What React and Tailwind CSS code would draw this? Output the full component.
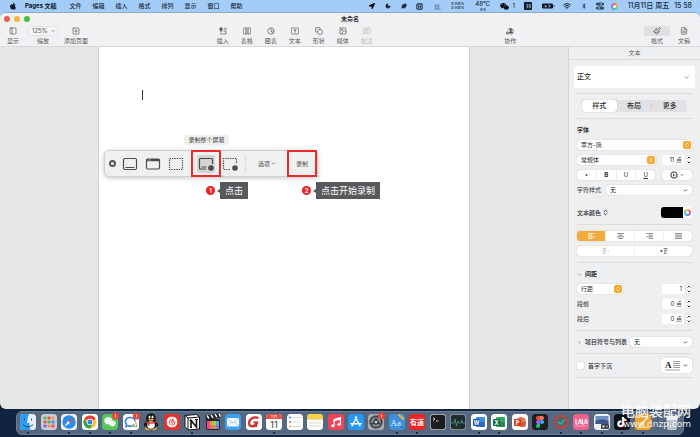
import React from "react";
import {
  ChevronDown,
  ChevronRight,
  ChevronsUpDown,
  FileText,
  Image,
  Leaf,
  MessageSquareText,
  Moon,
  Paintbrush,
  PanelLeft,
  SquarePlus,
  ToggleLeft,
  Wifi,
} from "lucide-react";
import { FaApple, FaBluetoothB, FaLocationArrow, FaMusic, FaTiktok, FaWeixin } from "react-icons/fa";
import { SiNeteasecloudmusic } from "react-icons/si";

const menus = ["文件", "编辑", "插入", "格式", "排列", "显示", "窗口", "帮助"];

function MenuBar() {
  return (
    <header className="flex h-3 shrink-0 items-center justify-between pr-2 pl-[9px] text-[6px] leading-[12px] font-medium text-[#1b2a3c]">
      <nav className="flex items-center gap-[11px] whitespace-nowrap">
        <FaApple className="mr-[-3px] h-2 w-2 text-[#101820]" />
        <a href="#pages" className="pr-[2px] font-bold text-[#0c141e]">
          Pages 文稿
        </a>
        {menus.map((name) => (
          <a href="#menu" key={name}>
            {name}
          </a>
        ))}
      </nav>
      <div className="flex items-center whitespace-nowrap">
        <span className="flex w-4 justify-center">
          <FaLocationArrow className="h-[6px] w-[6px] text-black" />
        </span>
        <span className="flex w-4 justify-center">
          <Moon className="h-[6px] w-[6px]" fill="currentColor" />
        </span>
        <span className="flex w-4 justify-center">
          <Leaf className="h-[6px] w-[6px]" fill="currentColor" />
        </span>
        <span className="flex w-4 justify-center">
          <svg viewBox="0 0 8 8" className="h-[7px] w-[7px]" fill="none" stroke="currentColor">
            <rect x="1" y="1" width="6" height="6" rx="1" strokeWidth="1.2" />
            <path d="M2.8 5.8V2.5l2.4 3V2.3" strokeWidth=".9" />
          </svg>
        </span>
        <span className="flex w-5 justify-center">
          <svg viewBox="0 0 8 8" className="h-[7px] w-[7px]" fill="none" stroke="#56718f">
            <path d="M1.5 1v6M3.5 3.5V7M5.5 1v6M.5 7h7M1.5 3h4" strokeWidth=".8" />
          </svg>
        </span>
        <span className="w-5 text-center text-[4px] leading-[4px]">
          0 KB/s
          <br />0 KB/s
        </span>
        <span className="flex w-[30px] flex-col items-center">
          <span className="leading-[8px]">48°C</span>
          <span className="text-[3px] leading-[4px]">SEN</span>
        </span>
        <span className="flex w-5 items-center justify-center gap-[3px]">
          <FaWeixin className="h-[9px] w-[9px] text-black" />1
        </span>
        <span className="flex w-[21px] justify-center">
          <svg viewBox="0 0 8 8" className="h-2 w-2">
            <rect width="8" height="8" rx="1" fill="#0d1722" />
            <path d="M2 2h1.5v4H2M2 4h1.5M5 2h1.5v4H5zM5 4h1.5" fill="none" stroke="#9fc4ea" strokeWidth=".6" />
          </svg>
        </span>
        <span className="flex w-5 justify-center">
          <svg viewBox="0 0 13 6" className="h-[6px] w-[13px]">
            <rect x="0" y=".5" width="11" height="5" rx="1.2" fill="#0d1722" />
            <rect x="11.5" y="2" width="1" height="2" fill="#34495f" />
            <path d="M3 2v2h1.5V3H3M6 2h1.5v2H6M8 3h1" stroke="#a8ccef" strokeWidth=".6" fill="none" />
          </svg>
        </span>
        <span className="flex w-[17px] justify-center">
          <Wifi className="h-2 w-2" strokeWidth={3} />
        </span>
        <span className="flex w-4 justify-center">
          <FaBluetoothB className="h-[6px] w-[6px]" />
        </span>
        <span className="flex w-4 flex-col items-center">
          <ToggleLeft className="h-1 w-2" strokeWidth={4} preserveAspectRatio="none" />
          <ToggleLeft className="h-1 w-2 rotate-180" strokeWidth={4} preserveAspectRatio="none" />
        </span>
        <span className="flex w-[14px] justify-center">
          <span className="h-[7px] w-[7px] rounded-full bg-[conic-gradient(#f06a5a,#f4b25c,#5fc97d,#4aa8ee,#a26be8,#f06a5a)] p-[2px]">
            <span className="block h-full rounded-full bg-white" />
          </span>
        </span>
        <time className="ml-[6px] text-[7px]">11月11日 周五</time>
        <time className="ml-[5px] text-[7px]">15 58</time>
      </div>
    </header>
  );
}

function Tool({ icon: Icon, label, disabled, active, wide }) {
  return (
    <button
      disabled={disabled}
      className={`flex flex-col items-center ${wide ? "w-[30px]" : "w-6"} ${
        disabled ? "text-[#bcbcbf]" : "text-[#58585c]"
      }`}
    >
      <span
        className={`flex h-[10px] items-center justify-center rounded-[2px] ${
          active ? "w-[26px] bg-[#e0e0e2]" : "w-5"
        }`}
      >
        <Icon className="h-2 w-2" strokeWidth={2} />
      </span>
      <span className="text-[6px] leading-[10px] whitespace-nowrap">{label}</span>
    </button>
  );
}

function InsertIcon({ className }) {
  return (
    <svg viewBox="0 0 24 24" className={className} fill="none" stroke="currentColor" strokeWidth="2">
      <path d="M3 3h6v9H3zM6 3v14M14 4h4M14 9h4M14 14h4M21 2v19H3" />
      <path d="M3 3h6v5H3z" fill="currentColor" />
    </svg>
  );
}

function TableIcon({ className }) {
  return (
    <svg viewBox="0 0 24 24" className={className} fill="none" stroke="currentColor" strokeWidth="2">
      <rect x="1" y="3" width="22" height="18" rx="2" />
      <path d="M8.500 3v18M15.500 3v18M8.500 9h7M8.500 15h7" />
    </svg>
  );
}

function ChartIcon({ className }) {
  return (
    <svg viewBox="0 0 24 24" className={className} fill="none" stroke="currentColor" strokeWidth="2">
      <circle cx="12" cy="12" r="9.500" />
      <path d="M12 3v9h9" />
      <path d="M12 12l6 7" />
    </svg>
  );
}

function TextBoxIcon({ className }) {
  return (
    <svg viewBox="0 0 24 24" className={className} fill="none" stroke="currentColor" strokeWidth="2">
      <rect x="1" y="3" width="22" height="18" rx="2" />
      <path d="M8 9h8M12 9v8" strokeWidth="2.5" />
    </svg>
  );
}

function ShapeIcon({ className }) {
  return (
    <svg viewBox="0 0 24 24" className={className} fill="none" stroke="currentColor" strokeWidth="2">
      <path d="M8 15H3a1 1 0 0 1-1-1V3a1 1 0 0 1 1-1h11a1 1 0 0 1 1 1v4" />
      <circle cx="15" cy="15" r="7.5" fill="#f1f1f3" />
    </svg>
  );
}

function CollabIcon({ className }) {
  return (
    <svg viewBox="0 0 24 24" className={className} fill="none" stroke="currentColor" strokeWidth="2">
      <path d="M5 9a9 9 0 1 1 8 13" />
      <circle cx="14" cy="9" r="3" fill="currentColor" />
      <path d="M9 18c1-6 10-6 11 0z" fill="currentColor" />
      <circle cx="5" cy="18" r="4" fill="#f1f1f3" />
      <path d="M5 16v4M3 18h4" />
    </svg>
  );
}

function Toolbar() {
  return (
    <div className="shrink-0 bg-[#f1f1f3]">
      <div className="grid h-3 grid-cols-[1fr_auto_1fr] items-center px-1">
        <div className="flex gap-1">
          <button aria-label="关闭" className="h-[6px] w-[6px] rounded-full bg-[#ec5f57]" />
          <button aria-label="最小化" className="h-[6px] w-[6px] rounded-full bg-[#f3b73b]" />
          <button aria-label="缩放窗口" className="h-[6px] w-[6px] rounded-full bg-[#43bf45]" />
        </div>
        <h1 className="text-[6px] leading-[12px] font-bold text-[#303033]">未命名</h1>
      </div>
      <div className="flex h-[21px] items-start justify-between pt-px pr-1 pl-px">
        <div className="flex w-[90px]">
          <Tool icon={PanelLeft} label="显示" />
          <div className="flex w-[36px] flex-col items-center text-[#58585c]">
            <div className="relative">
              <select
                id="zoom"
                className="block h-[10px] w-[30px] appearance-none rounded-[3px] border border-[#e4e4e6] bg-[#f5f5f7] pl-[3px] text-[6px] leading-[8px]"
              >
                <option>125%</option>
              </select>
              <ChevronDown className="pointer-events-none absolute top-[3px] right-[3px] h-1 w-1" strokeWidth={4} />
            </div>
            <label htmlFor="zoom" className="text-[6px] leading-[10px]">
              缩放
            </label>
          </div>
          <Tool icon={SquarePlus} label="添加页面" wide />
        </div>
        <div className="flex">
          <Tool icon={InsertIcon} label="插入" />
          <Tool icon={TableIcon} label="表格" />
          <Tool icon={ChartIcon} label="图表" />
          <Tool icon={TextBoxIcon} label="文本" />
          <Tool icon={ShapeIcon} label="形状" />
          <Tool icon={Image} label="媒体" />
          <Tool icon={MessageSquareText} label="批注" disabled />
        </div>
        <Tool icon={CollabIcon} label="协作" />
        <div className="flex">
          <Tool icon={Paintbrush} label="格式" active wide />
          <Tool icon={FileText} label="文稿" />
        </div>
      </div>
    </div>
  );
}

function CaptureButton({ label, active, children }) {
  return (
    <button
      aria-label={label}
      className={`flex h-[18px] w-[18px] items-center justify-center rounded-[3px] ${active ? "bg-[#d4d4d4]" : ""}`}
    >
      <svg viewBox="0 0 16 14" className="h-[14px] w-4" fill="none" stroke="#4c4c4c" strokeWidth="1.2">
        {children}
      </svg>
    </button>
  );
}

function Callout({ number, children }) {
  return (
    <div className="flex items-center">
      <span className="flex h-[9px] w-[9px] items-center justify-center rounded-full bg-[#f51d22] text-[6px] leading-none font-bold text-white">
        {number}
      </span>
      <span className="ml-[2px] border-y-2 border-r-[3px] border-y-transparent border-r-[#58595b]" />
      <span className="bg-[#58595b] px-[5px] text-[9px] leading-[17px] whitespace-nowrap text-white">{children}</span>
    </div>
  );
}

// Floating screen recording bar
function CaptureBar() {
  return (
    <div className="absolute top-[88px] left-[104px] w-[276px]">
      <span className="ml-[80px] block w-[45px] rounded-[2px] bg-[#f0f0ef] text-center text-[6px] leading-[10px] whitespace-nowrap text-[#454545]">
        录制整个屏幕
      </span>
      <div className="mt-[5px] flex h-[27px] w-[214px] items-center rounded-[5px] border border-[#d0d0cf] bg-[#f0f0ef] pl-1 shadow-[0_1px_4px_rgba(0,0,0,0.25)]">
        <button
          aria-label="关闭"
          className="h-[7px] w-[7px] shrink-0 rounded-full border-2 border-[#565656] bg-white"
        />
        <div className="ml-[5px] flex gap-[5px]">
          <CaptureButton label="捕捉整个屏幕">
            <rect x="1.5" y="1.5" width="13" height="11" rx="1.2" />
            <path d="M3.5 10.5h9" />
          </CaptureButton>
          <CaptureButton label="捕捉所选窗口">
            <rect x="1.5" y="2" width="13" height="10" rx="1.2" />
            <path d="M1.5 3.2h13" strokeWidth="2.2" />
            <path d="M3 3h3" stroke="#ddd" strokeWidth=".7" strokeDasharray=".8 .4" />
          </CaptureButton>
          <CaptureButton label="捕捉所选部分">
            <rect x="1.5" y="1.5" width="13" height="11" strokeDasharray="1.4 1" />
          </CaptureButton>
        </div>
        <div className="ml-[6px] flex h-[27px] w-[30px] shrink-0 items-center justify-center border-2 border-[#ee2b2b]">
          <CaptureButton label="录制整个屏幕" active>
            <path d="M8 12H2.5a1 1 0 0 1-1-1V2.500a1 1 0 0 1 1-1h11a1 1 0 0 1 1 1V7M3.500 10h5" />
            <circle cx="13" cy="11" r="2.800" fill="#4c4c4c" stroke="none" />
            <circle cx="13" cy="11" r="1" fill="#222" stroke="#777" strokeWidth=".5" />
          </CaptureButton>
        </div>
        <CaptureButton label="录制所选部分">
          <path d="M8 12.500H1.500v-11h13V7" strokeDasharray="1.4 1" />
          <circle cx="13" cy="11" r="2.800" fill="#4c4c4c" stroke="none" />
          <circle cx="13" cy="11" r="1" fill="#222" stroke="#777" strokeWidth=".5" />
        </CaptureButton>
        <span className="ml-[6px] h-[18px] w-px shrink-0 bg-[#dededd]" />
        <button className="ml-3 flex shrink-0 items-center text-[6px] leading-[12px] whitespace-nowrap text-[#505050]">
          选项
          <ChevronDown className="ml-px h-[5px] w-[5px]" strokeWidth={3} />
        </button>
        <button className="ml-auto h-[27px] w-[30px] shrink-0 border-2 border-[#ee2b2b] text-[6px] text-[#505050]">
          录制
        </button>
      </div>
      <div className="mt-[5px] ml-[102px] flex gap-[54px]">
        <Callout number="1">点击</Callout>
        <Callout number="2">点击开始录制</Callout>
      </div>
    </div>
  );
}

function Select({ label, value, accent, className }) {
  return (
    <div className={`relative ${className}`}>
      <select
        aria-label={label}
        className="block h-[10px] w-full appearance-none rounded-[3px] bg-white pl-1 text-[6px] leading-[10px] text-[#2a2a2c] shadow-[0_0_1px_rgba(0,0,0,0.35)]"
      >
        <option>{value}</option>
      </select>
      {accent ? (
        <span className="pointer-events-none absolute top-px right-px flex h-2 w-2 items-center justify-center rounded-[2px] bg-[#f5a82b]">
          <ChevronsUpDown className="h-[6px] w-[6px] text-white" strokeWidth={3} />
        </span>
      ) : (
        <ChevronDown className="pointer-events-none absolute top-[3px] right-1 h-[5px] w-[5px] text-[#333]" strokeWidth={4} />
      )}
    </div>
  );
}

function NumberField({ label, value }) {
  return (
    <div className="flex w-[30px] items-center justify-between">
      <input
        aria-label={label}
        defaultValue={value}
        className="h-[10px] w-[22px] bg-white pr-[2px] text-right text-[6px] leading-[10px] text-[#2a2a2c]"
      />
      <button
        aria-label={`调整${label}`}
        className="flex h-[10px] w-[6px] items-center justify-center rounded-[3px] bg-white shadow-[0_0_1px_rgba(0,0,0,0.35)]"
      >
        <svg viewBox="0 0 6 10" className="h-[10px] w-[6px]" fill="none" stroke="#333">
          <path d="M1.500 3.500L3 2l1.500 1.500M1.500 6.500L3 8l1.500-1.500" />
        </svg>
      </button>
    </div>
  );
}

function ButtonGroup({ className, children }) {
  return (
    <div
      className={`flex h-[10px] items-center divide-x divide-[#ededed] overflow-hidden rounded-[3px] bg-white shadow-[0_0_1px_rgba(0,0,0,0.35)] ${className}`}
    >
      {children}
    </div>
  );
}

const alignments = [
  { label: "左对齐", d: "M0 .5h8M0 2.500h5M0 4.500h8M0 6.500h5" },
  { label: "居中", d: "M0 .5h8M1.500 2.500h5M0 4.500h8M1.500 6.500h5" },
  { label: "右对齐", d: "M0 .5h8M3 2.500h5M0 4.500h8M3 6.500h5" },
  { label: "两端对齐", d: "M0 .5h8M0 2.500h8M0 4.500h8M0 6.500h8" },
];

function Divider() {
  return <hr className="border-[#dcdcde]" />;
}

function Inspector() {
  return (
    <aside className="w-[132px] shrink-0 border-l border-[#d3d4d4] bg-[#eeeff1] text-[6px] leading-[10px] text-[#2e2e31]">
      <h2 className="border-b border-[#dddddf] text-center text-[6px] leading-[12px] text-[#5c5c60]">文本</h2>
      <div className="px-[5px] pt-[6px]">
        <button className="flex h-[22px] w-full items-center justify-between rounded-[3px] bg-white px-[3px] text-[7px] font-medium">
          正文
          <ChevronDown className="mr-[2px] h-[7px] w-[7px] text-[#555]" />
        </button>
      </div>
      <div className="flex flex-col gap-[6px] pt-[5px] pr-2 pl-[8px]">
        <Divider />
        <div className="mx-[5px] flex h-3 items-center rounded-[3px] bg-[#e2e2e4] text-[7px] leading-[12px] font-medium">
          <button className="h-full flex-1 rounded-[3px] bg-white shadow-[0_0_1px_rgba(0,0,0,0.4)]">样式</button>
          <button className="h-full flex-1">布局</button>
          <span className="h-[6px] w-px bg-[#cfcfd2]" />
          <button className="h-full flex-1">更多</button>
        </div>
        <Divider />
      </div>

      <div className="flex flex-col gap-[5px] pt-[6px] pr-2 pl-[8px]">
        <h3 className="font-bold">字体</h3>
        <Select label="字体" value="苹方-简" accent className="w-full" />
        <div className="flex justify-between">
          <Select label="字样" value="常规体" accent className="w-[79px]" />
          <NumberField label="字号" value="11 点" />
        </div>
        <div className="flex justify-between">
          <ButtonGroup className="w-[78px]">
            <button className="flex-1">•</button>
            <button className="flex-1 font-bold">B</button>
            <button className="flex-1">U</button>
            <button className="flex-1 underline">U</button>
          </ButtonGroup>
          <button
            aria-label="高级选项"
            className="flex h-[10px] w-[30px] items-center justify-center gap-[2px] rounded-[3px] bg-white shadow-[0_0_1px_rgba(0,0,0,0.35)]"
          >
            <svg viewBox="0 0 8 8" className="h-2 w-2" fill="none" stroke="#333">
              <circle cx="4" cy="4" r="3" strokeWidth=".8" />
              <circle cx="4" cy="4" r="3.600" strokeWidth=".6" strokeDasharray=".8 .8" />
              <path d="M3.500 2.500v3M3.500 4h2" strokeWidth=".8" />
            </svg>
            <ChevronDown className="h-1 w-1" strokeWidth={4} />
          </button>
        </div>
        <div className="flex items-center justify-between whitespace-nowrap">
          <span>字符样式</span>
          <Select label="字符样式" value="无" className="w-[86px]" />
        </div>
      </div>

      <div className="flex flex-col gap-[6px] pt-3 pr-2 pl-[8px]">
        <div className="flex items-center justify-between">
          <button className="flex items-center gap-px font-medium">
            文本颜色
            <ChevronsUpDown className="h-[7px] w-[7px]" strokeWidth={3} />
          </button>
          <button
            aria-label="文本颜色"
            className="flex h-[11px] w-[31px] items-center overflow-hidden rounded-[3px] bg-white"
          >
            <span className="h-full w-[22px] bg-black" />
            <span className="ml-px h-[7px] w-[7px] rounded-full bg-[conic-gradient(#f7b84b,#ee5d62,#b86be0,#5a8df0,#4cc9d6,#6fd06a,#f7b84b)] p-[2px]">
              <span className="block h-full rounded-full bg-white" />
            </span>
          </button>
        </div>
        <Divider />
        <div className="flex flex-col gap-[5px]">
          <ButtonGroup className="w-full">
            {alignments.map((item, i) => (
              <button
                key={item.label}
                aria-label={item.label}
                className={`flex h-full flex-1 items-center justify-center ${
                  i === 0 ? "bg-[#f2ac3c] text-white" : "text-[#777]"
                }`}
              >
                <svg viewBox="0 0 8 7" className="h-[6px] w-[7px]" stroke="currentColor">
                  <path d={item.d} />
                </svg>
              </button>
            ))}
          </ButtonGroup>
          <ButtonGroup className="w-full">
            <button aria-label="减少缩进" className="flex h-full flex-1 items-center justify-center">
              <svg viewBox="0 0 8 7" className="h-[6px] w-[8px]" stroke="#bbb">
                <path d="M0 .5h4M0 2.500h4M0 4.500h4M0 6.500h3M6 3.500h1.500" />
              </svg>
            </button>
            <button aria-label="增加缩进" className="flex h-full flex-1 items-center justify-center">
              <svg viewBox="0 0 8 7" className="h-[6px] w-[8px]" stroke="#666">
                <path d="M3.500 .5h4.500M4 2.500h4M4 4.500h3M4 6.500h3" />
                <path d="M0 3.500h2" stroke="#111" strokeWidth="1.500" />
              </svg>
            </button>
          </ButtonGroup>
        </div>
        <Divider />
      </div>

      <div className="flex flex-col gap-[5px] pt-[6px] pr-2 pl-[8px]">
        <button className="flex items-center gap-[3px] font-bold">
          <ChevronDown className="h-[5px] w-[5px] text-[#777]" strokeWidth={3} />
          间距
        </button>
        <div className="flex justify-between">
          <Select label="间距类型" value="行距" accent className="w-[46px]" />
          <NumberField label="行距" value="1" />
        </div>
        <div className="flex justify-between">
          <span>段前</span>
          <NumberField label="段前" value="0 点" />
        </div>
        <div className="flex justify-between">
          <span>段后</span>
          <NumberField label="段后" value="0 点" />
        </div>
      </div>

      <div className="flex flex-col gap-[6px] pt-[6px] pr-2 pl-[8px]">
        <Divider />
        <div className="flex items-center justify-between whitespace-nowrap">
          <button className="flex items-center gap-[3px] font-medium">
            <ChevronRight className="h-[5px] w-[5px] text-[#777]" strokeWidth={3} />
            项目符号与列表
          </button>
          <Select label="项目符号与列表" value="无" className="w-[62px]" />
        </div>
        <Divider />
      </div>
      <div className="flex flex-col gap-1 pt-1 pr-2 pl-[8px]">
        <div className="flex items-center justify-between">
          <label className="flex items-center gap-1 font-medium">
            <input
              type="checkbox"
              className="h-[7px] w-[7px] appearance-none rounded-[1px] bg-white shadow-[0_0_1px_rgba(0,0,0,0.4)]"
            />
            首字下沉
          </label>
          <button
            aria-label="首字下沉样式"
            className="flex h-[15px] w-[31px] items-center justify-between rounded-[3px] bg-white px-1 shadow-[0_0_1px_rgba(0,0,0,0.35)]"
          >
            <svg viewBox="0 0 15 12" className="h-3 w-[15px]">
              <text x="0" y="7.500" fontSize="9" fontWeight="bold" fontFamily="Liberation Serif, serif" fill="#222">
                A
              </text>
              <path d="M8 1.500h7M8 3.500h7M8 5.500h7M8 7.500h7M0 10h15" stroke="#888" strokeWidth=".8" />
            </svg>
            <ChevronDown className="h-[5px] w-[5px]" strokeWidth={4} />
          </button>
        </div>
        <Divider />
      </div>
    </aside>
  );
}

function Tile({ fill, children }) {
  return (
    <>
      <rect width="16" height="16" rx="3.500" fill={fill} />
      {children}
    </>
  );
}

function Badge() {
  return (
    <>
      <circle cx="13.500" cy="2" r="3.500" fill="#ee4438" />
      <path d="M13.500.7v2.600" stroke="#fff" strokeWidth=".8" />
    </>
  );
}

const office = (letter, color, light, round) => (
  <Tile fill="#fff">
    {round ? (
      <circle cx="9" cy="8" r="5" fill={light} />
    ) : (
      <rect x="5" y="3" width="9" height="10" rx="1" fill={light} />
    )}
    <path d="M9 8h5v4a1 1 0 0 1-1 1H9z" fill={color} opacity=".6" />
    <rect x="2" y="5" width="7" height="7" rx="1" fill={color} />
    <text x="5.500" y="10.500" fontSize="5.500" fontWeight="bold" textAnchor="middle" fill="#fff">
      {letter}
    </text>
  </Tile>
);

const apps = [
  {
    name: "访达",
    running: true,
    art: (
      <Tile fill="#e6eef6">
        <path d="M3.500 0H9C7.500 3 7.300 6 7.300 9H9.500c0 3 .3 5 1 7h-7A3.500 3.500 0 0 1 0 12.500v-9A3.500 3.500 0 0 1 3.500 0z" fill="#2f9df4" />
        <path d="M4.500 4.500v2M11.500 4.500v2M3 10.500c3 3 7 3 10 0" stroke="#173a63" strokeWidth=".9" fill="none" />
      </Tile>
    ),
  },
  {
    name: "启动台",
    art: (
      <Tile fill="#c9ced6">
        {["#5cbf5a", "#e8544a", "#f0a33a", "#e5574b", "#47b16d", "#4f8fe8", "#8b68d8", "#f2913c", "#ec5070"].map((c, i) => (
          <rect key={i} x={2.5 + (i % 3) * 4} y={2.5 + Math.floor(i / 3) * 4} width="3" height="3" rx=".7" fill={c} />
        ))}
      </Tile>
    ),
  },
  {
    name: "Safari",
    running: true,
    art: (
      <Tile fill="#eef2f5">
        <circle cx="8" cy="8" r="6.700" fill="#2a8cec" />
        <path d="M12.500 3.500L9 9 7 7z" fill="#ee4b3e" />
        <path d="M3.500 12.500L7 7l2 2z" fill="#fff" />
      </Tile>
    ),
  },
  {
    name: "Chrome",
    running: true,
    art: (
      <Tile fill="#fff">
        <circle cx="8" cy="8" r="6.500" fill="#f7c52d" />
        <path d="M8 8L2.400 4.700A6.500 6.500 0 0 1 13.600 4.700L13.600 5z" fill="#e24336" />
        <path d="M2.400 4.700L5.200 9.600 8 14.500A6.500 6.500 0 0 1 2.400 4.700zM5 9l5.500 1-2.500 4.500z" fill="#319c4b" />
        <circle cx="8" cy="8" r="3.200" fill="#fff" />
        <circle cx="8" cy="8" r="2.500" fill="#3f7ee8" />
      </Tile>
    ),
  },
  {
    name: "微信",
    running: true,
    art: (
      <Tile fill="#55c45c">
        <FaWeixin x="2" y="2" size={12} color="#fff" />
        <Badge />
      </Tile>
    ),
  },
  {
    name: "企业微信",
    running: true,
    art: (
      <Tile fill="#fff">
        <path d="M11.500 10.500c-1.500 1.500-4 2-6 1.200L3 12.500l.6-2.200C.8 7.500 3 3.500 7 3.500c3 0 5 1.800 5.200 4" fill="none" stroke="#2f83e6" strokeWidth="1.500" />
        <path d="M12 8.500l2 2M10 11l2 2" stroke="#f3a834" strokeWidth="1.300" />
        <path d="M12.500 13l1.700-1.700" stroke="#43b85c" strokeWidth="1.300" />
        <Badge />
      </Tile>
    ),
  },
  {
    name: "QQ",
    art: (
      <>
        <ellipse cx="5" cy="14.800" rx="3" ry="1.300" fill="#f4a42c" />
        <ellipse cx="11" cy="14.800" rx="3" ry="1.300" fill="#f4a42c" />
        <path d="M8-.5c-3 0-4.700 2-4.700 4.500v2.500C2 8.500.5 10.500 1 12.500c1 .3 1.500-.5 2-1 .5 2.500 2 3.800 5 3.800s4.500-1.300 5-3.800c.5.500 1 1.300 2 1 .5-2-1-4-2.300-6V4C12.700 1.500 11-.5 8-.5z" fill="#111" />
        <ellipse cx="8" cy="11" rx="3.800" ry="3.800" fill="#fff" />
        <path d="M3 6.700c3 2 7 2 10 0l.3 1.800c-3 1.800-7.500 1.800-10.500 0z" fill="#e8362f" />
        <path d="M4.500 8.500h2v3h-2z" fill="#e8362f" />
        <ellipse cx="6.500" cy="3" rx="1" ry="1.500" fill="#fff" />
        <ellipse cx="9.500" cy="3" rx="1" ry="1.500" fill="#fff" />
        <ellipse cx="8" cy="5.700" rx="3" ry=".9" fill="#f4a42c" />
      </>
    ),
  },
  {
    name: "网易云音乐",
    art: (
      <Tile fill="#e5302c">
        <SiNeteasecloudmusic x="2.500" y="2.500" size={11} color="#fff" />
      </Tile>
    ),
  },
  {
    name: "Notion",
    running: true,
    art: (
      <>
        <path d="M1 1.500L12.500.5 15.500 3v12L4 16 1 12.500z" fill="#fff" stroke="#111" strokeLinejoin="round" />
        <path d="M1 1.500L4 4l11.500-1M4 4v12" fill="none" stroke="#111" />
        <path d="M7 13.500V6.500l5.500 6.500V5.500" fill="none" stroke="#111" strokeWidth="1.600" />
        <path d="M5.500 6.500h2M11 5.500h3M6 13.500h2" stroke="#111" />
      </>
    ),
  },
  {
    name: "Final Cut Pro",
    art: (
      <>
        <rect x="1" y="5" width="14" height="11" rx="2" fill="#262628" />
        <path d="M2 7h3.500v8H2z" fill="#ea4a8c" />
        <path d="M5 7h3.500v8H5z" fill="#f49a32" />
        <path d="M8 7h3v8H8z" fill="#9bd54a" />
        <path d="M11 7h3v8h-3z" fill="#36b6e8" />
        <path d="M2 11h12v4H2z" fill="#e9469a" opacity=".45" />
        <path d="M0 1.500L15.500-1l.5 4.500-15 2.500z" fill="#242426" />
        <path d="M2 1.500l2 3M6 .8l2 3M10 .2l2 3M14-.4l1.500 3" stroke="#eee" strokeWidth="1.500" />
      </>
    ),
  },
  {
    name: "邮件",
    art: (
      <Tile fill="#3d9ef3">
        <rect x="2" y="4" width="12" height="8.500" rx="1.300" fill="#fff" />
        <path d="M2.500 4.500L8 9l5.500-4.500M2.500 12l4-4M13.500 12l-4-4" fill="none" stroke="#7fb6e8" strokeWidth=".8" />
      </Tile>
    ),
  },
  {
    name: "福昕",
    art: (
      <Tile fill="#fff">
        <path d="M12.500 4C8 2 3 5 3 9.500c0 4 6.500 4 8-1H7.500" fill="none" stroke="#d4302b" strokeWidth="2.200" />
        <path d="M11 8.500L10 13" stroke="#d4302b" strokeWidth="1.800" />
      </Tile>
    ),
  },
  {
    name: "日历",
    running: true,
    art: (
      <Tile fill="#fff">
        <path d="M0 5V3.500A3.500 3.500 0 0 1 3.500 0h9A3.500 3.500 0 0 1 16 3.500V5z" fill="#ea4b42" />
        <text x="8" y="3.900" fontSize="3.500" textAnchor="middle" fill="#fff">
          11月
        </text>
        <text x="8" y="13.500" fontSize="9" textAnchor="middle" fill="#333">
          11
        </text>
      </Tile>
    ),
  },
  {
    name: "提醒事项",
    art: (
      <Tile fill="#fff">
        <path d="M5.500 3.500H14M5.500 8H14M5.500 12.500H14" stroke="#cfcfcf" strokeWidth=".8" />
        <circle cx="3" cy="3.500" r="1.100" fill="#3b8bf0" />
        <circle cx="3" cy="8" r="1.100" fill="#ec5548" />
        <circle cx="3" cy="12.500" r="1.100" fill="#f3a12f" />
      </Tile>
    ),
  },
  {
    name: "备忘录",
    art: (
      <Tile fill="#fbfaf6">
        <path d="M0 5V3.500A3.500 3.500 0 0 1 3.500 0h9A3.500 3.500 0 0 1 16 3.500V5z" fill="#f8cf45" />
        <path d="M0 5.500h16M2 9h12M2 12h12" stroke="#ccc8ba" strokeWidth=".6" />
      </Tile>
    ),
  },
  {
    name: "音乐",
    art: (
      <Tile fill="#ef4458">
        <FaMusic x="3" y="3" size={10} color="#fff" />
      </Tile>
    ),
  },
  {
    name: "App Store",
    art: (
      <Tile fill="#2496f3">
        <path d="M8.800 3L4 12M7.200 3L12 12M2.800 9.800h6.400M11 9.800h2.200" stroke="#fff" strokeWidth="1.400" strokeLinecap="round" />
      </Tile>
    ),
  },
  {
    name: "系统偏好设置",
    art: (
      <Tile fill="#a9adb0">
        <circle cx="8" cy="8" r="6" fill="#55595c" stroke="#303335" strokeWidth="1.500" strokeDasharray="1 .5" />
        <circle cx="8" cy="8" r="4" fill="none" stroke="#b9bcbe" strokeWidth=".8" />
        <path d="M8 8V3.500M8 8l4 2M8 8l-4 2" stroke="#22282b" strokeWidth="1.200" />
        <circle cx="8" cy="8" r="1.300" fill="#c6c9cb" />
        <Badge />
      </Tile>
    ),
  },
  {
    name: "词典",
    running: true,
    art: (
      <Tile fill="#3d92dc">
        <text x="1.500" y="11.500" fontSize="9" fontFamily="Liberation Serif, serif" fill="#e6f3ff">
          Aa
        </text>
        <path d="M9.500.5l5.500 5" stroke="#f4b23b" strokeWidth="2.200" />
        <path d="M11 12l3 2.500" stroke="#1f5f9f" />
      </Tile>
    ),
  },
  {
    name: "有道",
    running: true,
    art: (
      <Tile fill="#ec2726">
        <text x="8" y="10.800" fontSize="7" fontWeight="bold" textAnchor="middle" fill="#fff">
          有道
        </text>
      </Tile>
    ),
  },
  {
    name: "终端",
    art: (
      <Tile fill="#c9c9c9">
        <rect x=".7" y=".7" width="14.600" height="14.600" rx="3" fill="#1d1d1f" />
        <path d="M3 3.500l2 1.500-2 1.500M6 7h2.500" fill="none" stroke="#eee" strokeWidth=".9" />
      </Tile>
    ),
  },
  {
    name: "活动监视器",
    art: (
      <Tile fill="#a9aeb0">
        <rect x=".7" y=".7" width="14.600" height="14.600" rx="3" fill="#1f2b2c" />
        <path d="M1 9h3l1-4 1.500 7L8 7l1 2h2l.8-3 .7 3H15" fill="none" stroke="#57a795" strokeWidth=".7" />
      </Tile>
    ),
  },
  { name: "Word", running: true, art: office("W", "#1c55ae", "#3e8de0") },
  { name: "Excel", running: true, art: office("X", "#157243", "#35a866") },
  { name: "PowerPoint", art: office("P", "#c44325", "#ec7350", true) },
  {
    name: "Figma",
    art: (
      <Tile fill="#1f1f21">
        <path d="M8 2H6a2 2 0 0 0 0 4h2z" fill="#ef4f2b" />
        <path d="M8 2h2a2 2 0 0 1 0 4H8z" fill="#fb7465" />
        <path d="M8 6H6a2 2 0 0 0 0 4h2z" fill="#a25bf5" />
        <circle cx="10" cy="8" r="2" fill="#28b7f5" />
        <path d="M8 10H6a2 2 0 1 0 2 2z" fill="#22c77a" />
      </Tile>
    ),
  },
  {
    name: "滴答清单",
    running: true,
    art: (
      <>
        <circle cx="8" cy="8" r="6" fill="#4e6871" stroke="#dc4437" strokeWidth="1.800" />
        <circle cx="8" cy="8" r="6" fill="none" stroke="#7c3b3b" strokeWidth="1.800" strokeDasharray=".6 2.200" />
        <path d="M5 7.500l2.500 2.500L11.500 5.500" fill="none" stroke="#3cb58d" strokeWidth="1.300" />
      </>
    ),
  },
  {
    name: "LALA",
    running: true,
    art: (
      <Tile fill="#f0608d">
        <path d="M3 5v5h2M6 10V7l1-1.500L8 7v3M9.500 5v5h1.500M12 10V7l1-1.500L14 7v3" fill="none" stroke="#fff" strokeWidth="1.100" />
        <path d="M2.500 12h11" stroke="#fac0d2" strokeWidth=".7" />
      </Tile>
    ),
  },
  {
    name: "预览",
    running: true,
    art: (
      <Tile fill="#eef0f3">
        <rect x="1.500" y="2" width="13" height="8" fill="#6f8fc4" />
        <path d="M1.500 7c3-2 9-2 13 0v3h-13z" fill="#3f5688" />
        <rect x="7" y="10" width="8" height="5" rx="1" fill="#3c4045" />
        <circle cx="9.500" cy="12.500" r="1.300" fill="#c9cdd2" />
        <circle cx="13" cy="12.500" r="1" fill="#9298a0" />
      </Tile>
    ),
  },
  {
    name: "抖音",
    running: true,
    art: (
      <Tile fill="#101014">
        <FaTiktok x="2.500" y="3" size={10} color="#35e0e6" />
        <FaTiktok x="3.500" y="3.500" size={10} color="#f03a5e" />
        <FaTiktok x="3" y="3" size={10} color="#fff" />
      </Tile>
    ),
  },
  {
    name: "Pages",
    running: true,
    art: (
      <Tile fill="#f5a12e">
        <path d="M3 12.500L12.500 2.500l1 1L5 12.500z" fill="#fff" />
        <path d="M2.500 13.500h11" stroke="#fde3b8" />
      </Tile>
    ),
  },
];

function DockItem({ name, running, art }) {
  return (
    <button aria-label={name} className="flex min-w-0 flex-1 flex-col items-center gap-[2px]">
      <svg viewBox="0 0 16 16" className="h-4 w-4 overflow-visible">
        {art}
      </svg>
      <span className={`h-[2px] w-[2px] rounded-full ${running ? "bg-[#0e1520]" : ""}`} />
    </button>
  );
}

function Dock() {
  return (
    <footer className="relative shrink-0 px-4 pt-[2px] pb-[2px]">
      <div className="flex h-6 items-start rounded-[6px] border border-[#6b7d93] bg-[#56687f] px-px pt-[2px]">
        {apps.map((app) => (
          <DockItem key={app.name} {...app} />
        ))}
        <span className="mx-1 h-4 w-px bg-[#44566b]" />
        <button aria-label="废纸篓" className="flex w-5 justify-center">
          <svg viewBox="0 0 16 16" className="h-4 w-4">
            <path d="M2 2h12l-1.500 13a1 1 0 0 1-1 1h-7a1 1 0 0 1-1-1z" fill="#c4cad0" />
            <path d="M3 2l3 2 2-3 3 3 3-2-1 4H3z" fill="#f0f1f2" />
            <path d="M5 6l.6 9M8 6v9M11 6l-.6 9" stroke="#98a2ad" strokeWidth=".6" />
            <ellipse cx="8" cy="2" rx="6" ry="1.200" fill="none" stroke="#e8ebee" strokeWidth=".7" />
          </svg>
        </button>
      </div>
      <div className="pointer-events-none absolute right-[9px] bottom-[7px] text-right whitespace-nowrap text-white/90">
        <p className="text-[14px] leading-[15px] font-medium">电脑装配网</p>
        <p className="font-['DejaVu_Sans'] text-[9px] leading-[12px]">www.dnzp.com</p>
      </div>
    </footer>
  );
}

export default function App() {
  return (
    <div className="flex min-h-screen flex-col overflow-hidden bg-[linear-gradient(#a3cdf8_0,#a3cdf8_24px,#14294a_60px,#10233f_100%)] font-[Inter,'Noto_Sans_CJK_SC',sans-serif]">
      <MenuBar />
      <main className="relative flex flex-1 flex-col overflow-hidden rounded-[6px] border-t border-[#8fa9c6]">
        <Toolbar />
        <div className="flex flex-1 border-t border-[#d9d9da]">
          <div className="flex flex-1 justify-center bg-[#e6e7e7]">
            <div className="w-[372px] border-x border-[#d2d3d3] bg-white px-[43px] pt-[43px]">
              <span className="block h-[10px] w-px bg-[#333]" />
            </div>
          </div>
          <Inspector />
        </div>
        <div className="absolute top-[34px] left-0">
          <CaptureBar />
        </div>
      </main>
      <Dock />
    </div>
  );
}
